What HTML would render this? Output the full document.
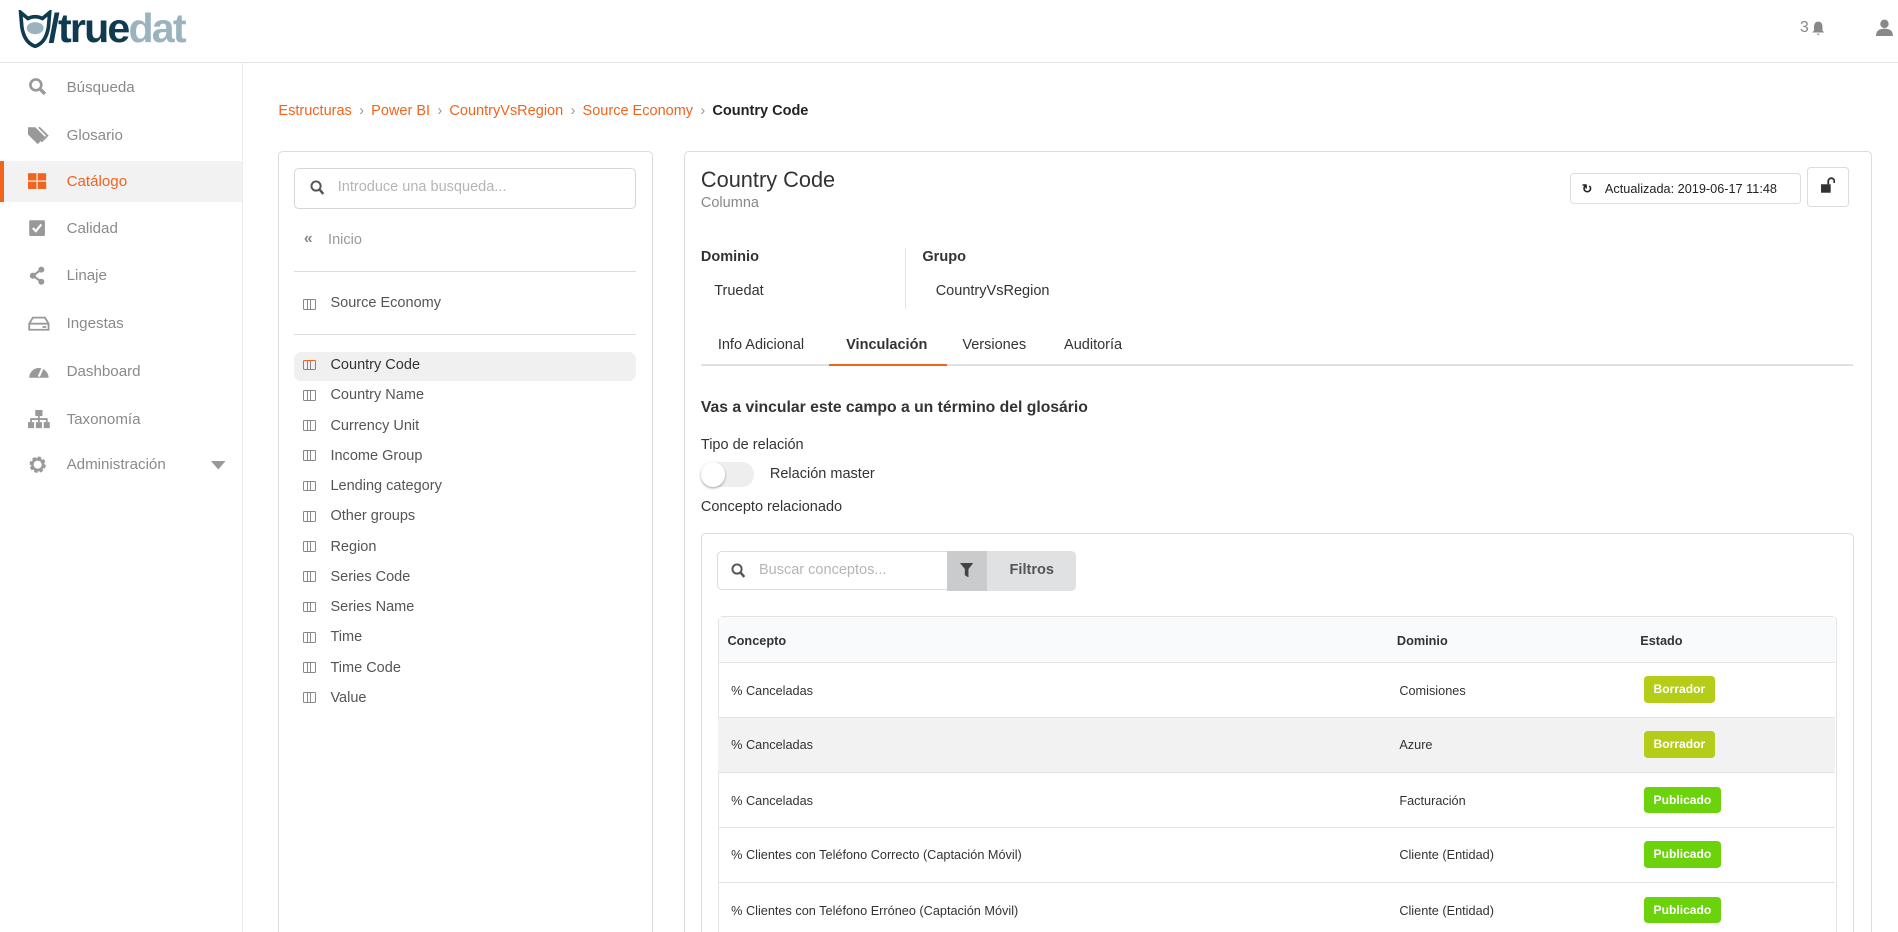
<!DOCTYPE html>
<html><head><meta charset="utf-8">
<style>
html{zoom:1.2105;overflow:hidden;height:770px}
body{margin:0;width:1568px;height:770px;overflow:hidden;background:#fff;font-family:"Liberation Sans",sans-serif;color:#333;position:relative}
.a{position:absolute}
.hdr{left:0;top:0;width:1568px;height:51px;border-bottom:1px solid #e3e3e3}
.side{left:0;top:52px;width:200px;height:718px;border-right:1px solid #ededed}
.si{position:absolute;left:0;width:200px;height:34px;font-size:12.5px;color:#8a8a8a;line-height:34px}
.si span{position:absolute;left:55px}
.si svg{position:absolute;left:23px;top:9px}
.bc{left:230px;top:85px;font-size:12px;color:#f0641e}
.bc i{font-style:normal;color:#999;margin:0 6px}
.card{border:1px solid #dcdcdc;border-bottom:none;border-radius:4px 4px 0 0;background:#fff}
.li{position:absolute;left:250px;font-size:12px;color:#555}
.ic{display:inline-block;width:11px;height:9px;border:1.5px solid #888;border-radius:1px;position:absolute;left:0;top:2px;box-sizing:border-box}
.ic:after{content:"";position:absolute;left:3px;top:0;width:3px;height:100%;border-left:1.5px solid #888;border-right:1.5px solid #888;box-sizing:border-box}
.tr{position:absolute;left:593px;width:923px;height:45px;border-top:1px solid #e3e3e3;font-size:10.5px;color:#333}
.tr span{position:absolute;top:16px}
.bd{position:absolute;left:765px;top:11px;height:22px;line-height:22px;border-radius:3px;color:#fff;font-weight:bold;font-size:10px;padding:0 8px}
.ol{background:#b5cc18}.gr{background:#6cd20c}
</style></head><body>
<div class="a hdr"></div>
<svg class="a" style="left:14px;top:8px" width="30" height="32" viewBox="0 0 30 32"><path d="M3 2 L9 7 Q15 4 21 7 L27 2 L26 14 Q24 27 15 30 Q6 27 4 14 Z" fill="none" stroke="#0f3a4f" stroke-width="3"/><ellipse cx="15" cy="15" rx="7" ry="5" fill="#9ab3bf"/></svg>
<div class="a" style="left:40px;top:3px;font-size:34px;font-weight:bold;letter-spacing:-1.5px;color:#0f3a4f;line-height:40px">/true<span style="color:#9ab3bf">dat</span></div>
<div class="a" style="left:1487px;top:16px;font-size:13px;color:#888">3</div>
<svg class="a" style="left:1496px;top:17px" width="12" height="12" viewBox="0 0 12 12"><path d="M6 0.5 C3 0.5 2.5 3 2.5 5 L2.5 8 L1 9.5 L11 9.5 L9.5 8 L9.5 5 C9.5 3 9 0.5 6 0.5Z M4.5 10.5 L7.5 10.5 Q6 12.5 4.5 10.5Z" fill="#888"/></svg>
<svg class="a" style="left:1550px;top:16px" width="14" height="14" viewBox="0 0 14 14"><circle cx="7" cy="4" r="3.5" fill="#888"/><path d="M0 14 Q0 8 7 8 Q14 8 14 14Z" fill="#888"/></svg>

<div class="a side">
 <div class="si" style="top:3px"><svg width="16" height="16" viewBox="0 0 16 16"><circle cx="6.5" cy="6.5" r="4.5" fill="none" stroke="#999" stroke-width="2.2"/><path d="M10 10 L14 14" stroke="#999" stroke-width="2.8"/></svg><span>Búsqueda</span></div>
 <div class="si" style="top:43px"><svg width="18" height="16" viewBox="0 0 18 16"><path d="M0 1 L0 7 L8 15 L14 9 L6 1Z" fill="#999"/><path d="M9 1 L16 8 L11 13" fill="none" stroke="#999" stroke-width="1.5"/></svg><span>Glosario</span></div>
 <div class="si" style="top:81px;background:#f2f2f2;color:#f0641e"><div class="a" style="left:0;top:0;width:3px;height:34px;background:#f0641e"></div><svg width="16" height="16" viewBox="0 0 16 16"><rect x="0" y="1" width="7" height="6" fill="#f0641e"/><rect x="8" y="1" width="7" height="6" fill="#f0641e"/><rect x="0" y="8" width="7" height="6" fill="#f0641e"/><rect x="8" y="8" width="7" height="6" fill="#f0641e"/></svg><span>Catálogo</span></div>
 <div class="si" style="top:120px"><svg width="16" height="16" viewBox="0 0 16 16"><rect x="1" y="1" width="13" height="13" rx="1" fill="#999"/><path d="M4 7.5 L6.5 10 L11 4.5" fill="none" stroke="#fff" stroke-width="1.8"/></svg><span>Calidad</span></div>
 <div class="si" style="top:159px"><svg width="16" height="16" viewBox="0 0 16 16"><circle cx="11" cy="3" r="2.5" fill="#999"/><circle cx="4" cy="8" r="2.5" fill="#999"/><circle cx="11" cy="13" r="2.5" fill="#999"/><path d="M11 3 L4 8 L11 13" stroke="#999" stroke-width="1.8" fill="none"/></svg><span>Linaje</span></div>
 <div class="si" style="top:198px"><svg width="18" height="16" viewBox="0 0 18 16"><path d="M1 8 L4 3 L14 3 L17 8 L17 13 L1 13Z" fill="none" stroke="#999" stroke-width="1.5"/><path d="M1 8 L17 8" stroke="#999" stroke-width="1.5"/><rect x="12" y="10" width="3" height="1.5" fill="#999"/></svg><span>Ingestas</span></div>
 <div class="si" style="top:238px"><svg width="18" height="16" viewBox="0 0 18 16"><path d="M1 13 A8 8 0 1 1 17 13Z" fill="#999"/><path d="M9 12 L12 5" stroke="#fff" stroke-width="1.8"/></svg><span>Dashboard</span></div>
 <div class="si" style="top:278px"><svg width="18" height="16" viewBox="0 0 18 16"><rect x="6" y="0" width="6" height="5" fill="#999"/><rect x="0" y="10" width="5" height="5" fill="#999"/><rect x="6.5" y="10" width="5" height="5" fill="#999"/><rect x="13" y="10" width="5" height="5" fill="#999"/><path d="M9 5 L9 10 M2.5 10 L2.5 7.5 L15.5 7.5 L15.5 10" stroke="#999" stroke-width="1.5" fill="none"/></svg><span>Taxonomía</span></div>
 <div class="si" style="top:315px"><svg width="16" height="16" viewBox="0 0 16 16"><circle cx="8" cy="8" r="5" fill="none" stroke="#999" stroke-width="3.5" stroke-dasharray="2.5 1.4"/><circle cx="8" cy="8" r="4.5" fill="none" stroke="#999" stroke-width="2"/></svg><span>Administración</span><svg style="left:174px;top:14px" width="12" height="7" viewBox="0 0 12 7"><path d="M0 0 L12 0 L6 7Z" fill="#999"/></svg></div>
</div>

<div class="a bc">Estructuras<i>›</i>Power BI<i>›</i>CountryVsRegion<i>›</i>Source Economy<i>›</i><b style="color:#222">Country Code</b></div>

<div class="a card" style="left:230px;top:125px;width:308px;height:645px"></div>
<div class="a" style="left:243px;top:139px;width:281px;height:32px;border:1px solid #d6d6d6;border-radius:4px"></div>
<svg class="a" style="left:256px;top:149px" width="12" height="13" viewBox="0 0 12 13"><circle cx="5" cy="5" r="3.8" fill="none" stroke="#555" stroke-width="1.6"/><path d="M8 8 L11 11.5" stroke="#555" stroke-width="2"/></svg>
<div class="a" style="left:279px;top:148px;font-size:12px;color:#b5b5b5">Introduce una busqueda...</div>
<div class="a" style="left:251px;top:190px;font-size:13px;color:#888;font-weight:bold">«</div>
<div class="a" style="left:271px;top:192px;font-size:12px;color:#999">Inicio</div>
<div class="a" style="left:243px;top:224px;width:282px;border-top:1px solid #ddd"></div>
<div class="li" style="top:244px"><span class="ic" style="left:0;top:3px"></span><span style="margin-left:23px">Source Economy</span></div>
<div class="a" style="left:243px;top:276px;width:282px;border-top:1px solid #ddd"></div>
<div class="a" style="left:243px;top:291px;width:282px;height:24px;background:#f0f0f0;border-radius:6px"></div>
<div class="li" style="top:295px;color:#333"><span class="ic" style="border-color:#f0641e"></span><span style="margin-left:23px">Country Code</span></div>
<div class="li" style="top:320px"><span class="ic"></span><span style="margin-left:23px">Country Name</span></div>
<div class="li" style="top:345px"><span class="ic"></span><span style="margin-left:23px">Currency Unit</span></div>
<div class="li" style="top:370px"><span class="ic"></span><span style="margin-left:23px">Income Group</span></div>
<div class="li" style="top:395px"><span class="ic"></span><span style="margin-left:23px">Lending category</span></div>
<div class="li" style="top:420px"><span class="ic"></span><span style="margin-left:23px">Other groups</span></div>
<div class="li" style="top:445px"><span class="ic"></span><span style="margin-left:23px">Region</span></div>
<div class="li" style="top:470px"><span class="ic"></span><span style="margin-left:23px">Series Code</span></div>
<div class="li" style="top:495px"><span class="ic"></span><span style="margin-left:23px">Series Name</span></div>
<div class="li" style="top:520px"><span class="ic"></span><span style="margin-left:23px">Time</span></div>
<div class="li" style="top:545px"><span class="ic"></span><span style="margin-left:23px">Time Code</span></div>
<div class="li" style="top:570px"><span class="ic"></span><span style="margin-left:23px">Value</span></div>

<div class="a card" style="left:565px;top:125px;width:980px;height:645px"></div>
<div class="a" style="left:579px;top:138px;font-size:18px;color:#333">Country Code</div>
<div class="a" style="left:579px;top:161px;font-size:12px;color:#888">Columna</div>
<div class="a" style="left:1297px;top:143px;width:189px;height:24px;border:1px solid #ddd;border-radius:3px;font-size:10.5px;line-height:24px;color:#222"><span style="position:absolute;left:9px;font-weight:bold">↻</span><span style="position:absolute;left:28px">Actualizada: 2019-06-17 11:48</span></div>
<div class="a" style="left:1493px;top:138px;width:33px;height:31px;border:1px solid #ddd;border-radius:3px"></div>
<svg class="a" style="left:1504px;top:146px" width="12" height="14" viewBox="0 0 12 14"><path d="M6 6 L6 3.5 A2.5 2.5 0 0 1 11 3.5 L11 5" fill="none" stroke="#333" stroke-width="1.5"/><rect x="0" y="6" width="8" height="7" fill="#333"/></svg>
<div class="a" style="left:579px;top:206px;font-size:12px;font-weight:bold">Dominio</div>
<div class="a" style="left:590px;top:234px;font-size:12px">Truedat</div>
<div class="a" style="left:748px;top:205px;height:50px;border-left:1px solid #e3e3e3"></div>
<div class="a" style="left:762px;top:206px;font-size:12px;font-weight:bold">Grupo</div>
<div class="a" style="left:773px;top:234px;font-size:12px">CountryVsRegion</div>
<div class="a" style="left:593px;top:278px;font-size:12px">Info Adicional</div>
<div class="a" style="left:699px;top:278px;font-size:12px;font-weight:bold">Vinculación</div>
<div class="a" style="left:795px;top:278px;font-size:12px">Versiones</div>
<div class="a" style="left:879px;top:278px;font-size:12px">Auditoría</div>
<div class="a" style="left:579px;top:301px;width:952px;border-top:2px solid #e0e0e0"></div>
<div class="a" style="left:685px;top:301px;width:97px;border-top:2px solid #f0641e"></div>
<div class="a" style="left:579px;top:330px;font-size:13px;font-weight:bold">Vas a vincular este campo a un término del glosário</div>
<div class="a" style="left:579px;top:361px;font-size:12px">Tipo de relación</div>
<div class="a" style="left:579px;top:382px;width:44px;height:20px;border-radius:10px;background:#eee"></div>
<div class="a" style="left:579px;top:382px;width:20px;height:20px;border-radius:10px;background:#fff;box-shadow:0 1px 2px rgba(0,0,0,.35)"></div>
<div class="a" style="left:636px;top:385px;font-size:12px">Relación master</div>
<div class="a" style="left:579px;top:412px;font-size:12px">Concepto relacionado</div>
<div class="a" style="left:579px;top:440px;width:951px;height:330px;border:1px solid #ddd;border-bottom:none;border-radius:4px 4px 0 0"></div>
<div class="a" style="left:592px;top:455px;width:195px;height:31px;border:1px solid #ddd;border-radius:4px 0 0 4px"></div>
<svg class="a" style="left:604px;top:465px" width="12" height="13" viewBox="0 0 12 13"><circle cx="5" cy="5" r="3.8" fill="none" stroke="#555" stroke-width="1.6"/><path d="M8 8 L11 11.5" stroke="#555" stroke-width="2"/></svg>
<div class="a" style="left:627px;top:464px;font-size:12px;color:#b5b5b5">Buscar conceptos...</div>
<div class="a" style="left:782px;top:455px;width:107px;height:33px;background:#e0e1e2;border-radius:0 4px 4px 0"></div>
<div class="a" style="left:782px;top:455px;width:33px;height:33px;background:#cacbcd"></div>
<svg class="a" style="left:793px;top:465px" width="11" height="12" viewBox="0 0 11 12"><path d="M0 0 L11 0 L7 5 L7 12 L4 10 L4 5Z" fill="#444"/></svg>
<div class="a" style="left:834px;top:464px;font-size:12px;color:#555;font-weight:bold">Filtros</div>

<div class="a" style="left:593px;top:509px;width:923px;height:261px;border:1px solid #e3e3e3;border-bottom:none;border-radius:4px 4px 0 0"></div>
<div class="a" style="left:594px;top:510px;width:922px;height:37px;background:#f9fafb;font-size:10.5px;font-weight:bold">
 <span class="a" style="left:7px;top:13px">Concepto</span><span class="a" style="left:560px;top:13px">Dominio</span><span class="a" style="left:761px;top:13px">Estado</span></div>
<div class="tr" style="top:547px"><span style="left:11px">% Canceladas</span><span style="left:563px">Comisiones</span><div class="bd ol">Borrador</div></div>
<div class="tr" style="top:592px;background:#f2f2f2"><span style="left:11px">% Canceladas</span><span style="left:563px">Azure</span><div class="bd ol">Borrador</div></div>
<div class="tr" style="top:638px"><span style="left:11px">% Canceladas</span><span style="left:563px">Facturación</span><div class="bd gr">Publicado</div></div>
<div class="tr" style="top:683px"><span style="left:11px">% Clientes con Teléfono Correcto (Captación Móvil)</span><span style="left:563px">Cliente (Entidad)</span><div class="bd gr">Publicado</div></div>
<div class="tr" style="top:729px;height:41px"><span style="left:11px">% Clientes con Teléfono Erróneo (Captación Móvil)</span><span style="left:563px">Cliente (Entidad)</span><div class="bd gr">Publicado</div></div>
</body></html>
